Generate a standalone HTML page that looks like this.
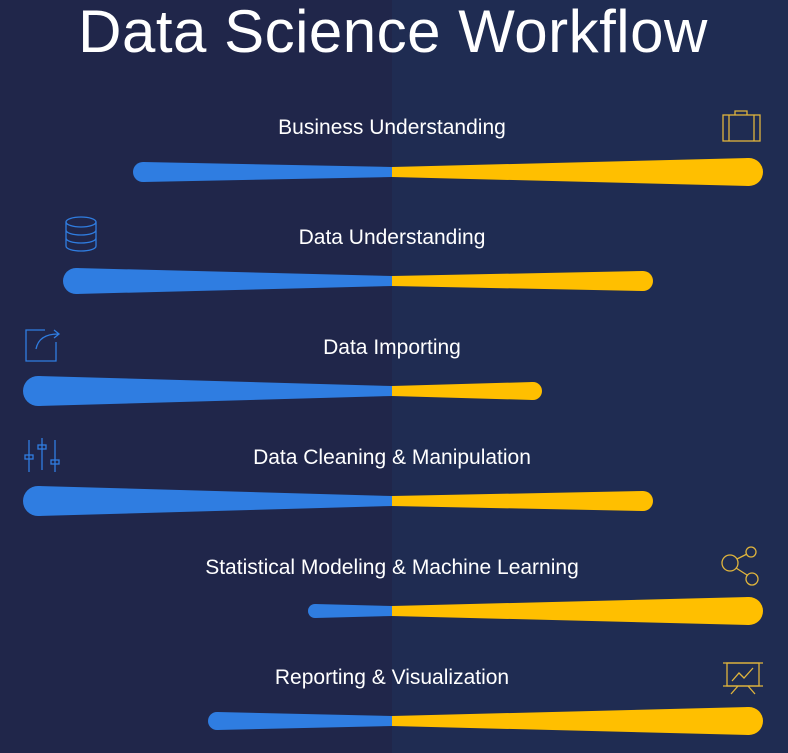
<!DOCTYPE html>
<html><head><style>
html,body{margin:0;padding:0}
body{width:788px;height:753px;overflow:hidden;position:relative;font-family:"Liberation Sans",sans-serif;
background:linear-gradient(to right,#20264a 0,#20264a 392px,#1f2c52 392px,#1f2c52 100%);}
.t{position:absolute;left:0;width:784px;text-align:center;color:#fff}
h1{margin:0;position:absolute;top:-3px;left:0;width:786px;text-align:center;color:#fff;font-weight:normal;font-size:60px;letter-spacing:0.5px}
.l{font-size:21px}
svg{position:absolute;left:0;top:0}
</style></head><body>
<h1>Data Science Workflow</h1>
<div class="t l" style="top:116px">Business Understanding</div>
<div class="t l" style="top:226px">Data Understanding</div>
<div class="t l" style="top:336px">Data Importing</div>
<div class="t l" style="top:446px">Data Cleaning &amp; Manipulation</div>
<div class="t l" style="top:556px">Statistical Modeling &amp; Machine Learning</div>
<div class="t l" style="top:666px">Reporting &amp; Visualization</div>
<svg width="788" height="753" viewBox="0 0 788 753">
<g fill="#2f7de1">
<circle cx="143" cy="172" r="10"/><polygon points="143,162 392,167 392,177 143,182"/>
<circle cx="76" cy="281" r="13"/><polygon points="76,268 392,276 392,286 76,294"/>
<circle cx="38" cy="391" r="15"/><polygon points="38,376 392,386 392,396 38,406"/>
<circle cx="38" cy="501" r="15"/><polygon points="38,486 392,496 392,506 38,516"/>
<circle cx="315" cy="611" r="7"/><polygon points="315,604 392,606 392,616 315,618"/>
<circle cx="217" cy="721" r="9"/><polygon points="217,712 392,716 392,726 217,730"/>
</g>
<g fill="#ffbf00">
<circle cx="749" cy="172" r="14"/><polygon points="392,167 749,158 749,186 392,177"/>
<circle cx="643" cy="281" r="10"/><polygon points="392,276 643,271 643,291 392,286"/>
<circle cx="533" cy="391" r="9"/><polygon points="392,386 533,382 533,400 392,396"/>
<circle cx="643" cy="501" r="10"/><polygon points="392,496 643,491 643,511 392,506"/>
<circle cx="749" cy="611" r="14"/><polygon points="392,606 749,597 749,625 392,616"/>
<circle cx="749" cy="721" r="14"/><polygon points="392,716 749,707 749,735 392,726"/>
</g>
<g fill="none" stroke="#2f7de1" stroke-width="1.3">
<ellipse cx="81" cy="222" rx="15" ry="5"/>
<path d="M66 222v24c0 3 7 5 15 5s15-2 15-5v-24M66 230c0 3 7 5 15 5s15-2 15-5M66 238c0 3 7 5 15 5s15-2 15-5"/>
<path d="M45 330H26v31h30v-19"/>
<path d="M36 349c2-10 9-15 22-15M54 330l5 4-5 4"/>
<path d="M29 440v32M42 438v32M55 440v32"/>
<rect x="25" y="455" width="8" height="4"/><rect x="38" y="445" width="8" height="4"/><rect x="51" y="460" width="8" height="4"/>
</g>
<g fill="none" stroke="#e0b53c" stroke-width="1.3">
<rect x="723" y="115" width="37" height="26"/>
<path d="M729 115v26M754 115v26M735 115v-4h12v4"/>
<circle cx="730" cy="563" r="8"/><circle cx="751" cy="552" r="5"/><circle cx="752" cy="579" r="6"/>
<path d="M737 559l10-5M736 568l11 7"/>
<rect x="727" y="663" width="32" height="23"/>
<path d="M723 663h40M723 686h40M732 681l7-8 5 5 9-10M738 686l-7 8M748 686l7 8"/>
</g>
</svg>
</body></html>
